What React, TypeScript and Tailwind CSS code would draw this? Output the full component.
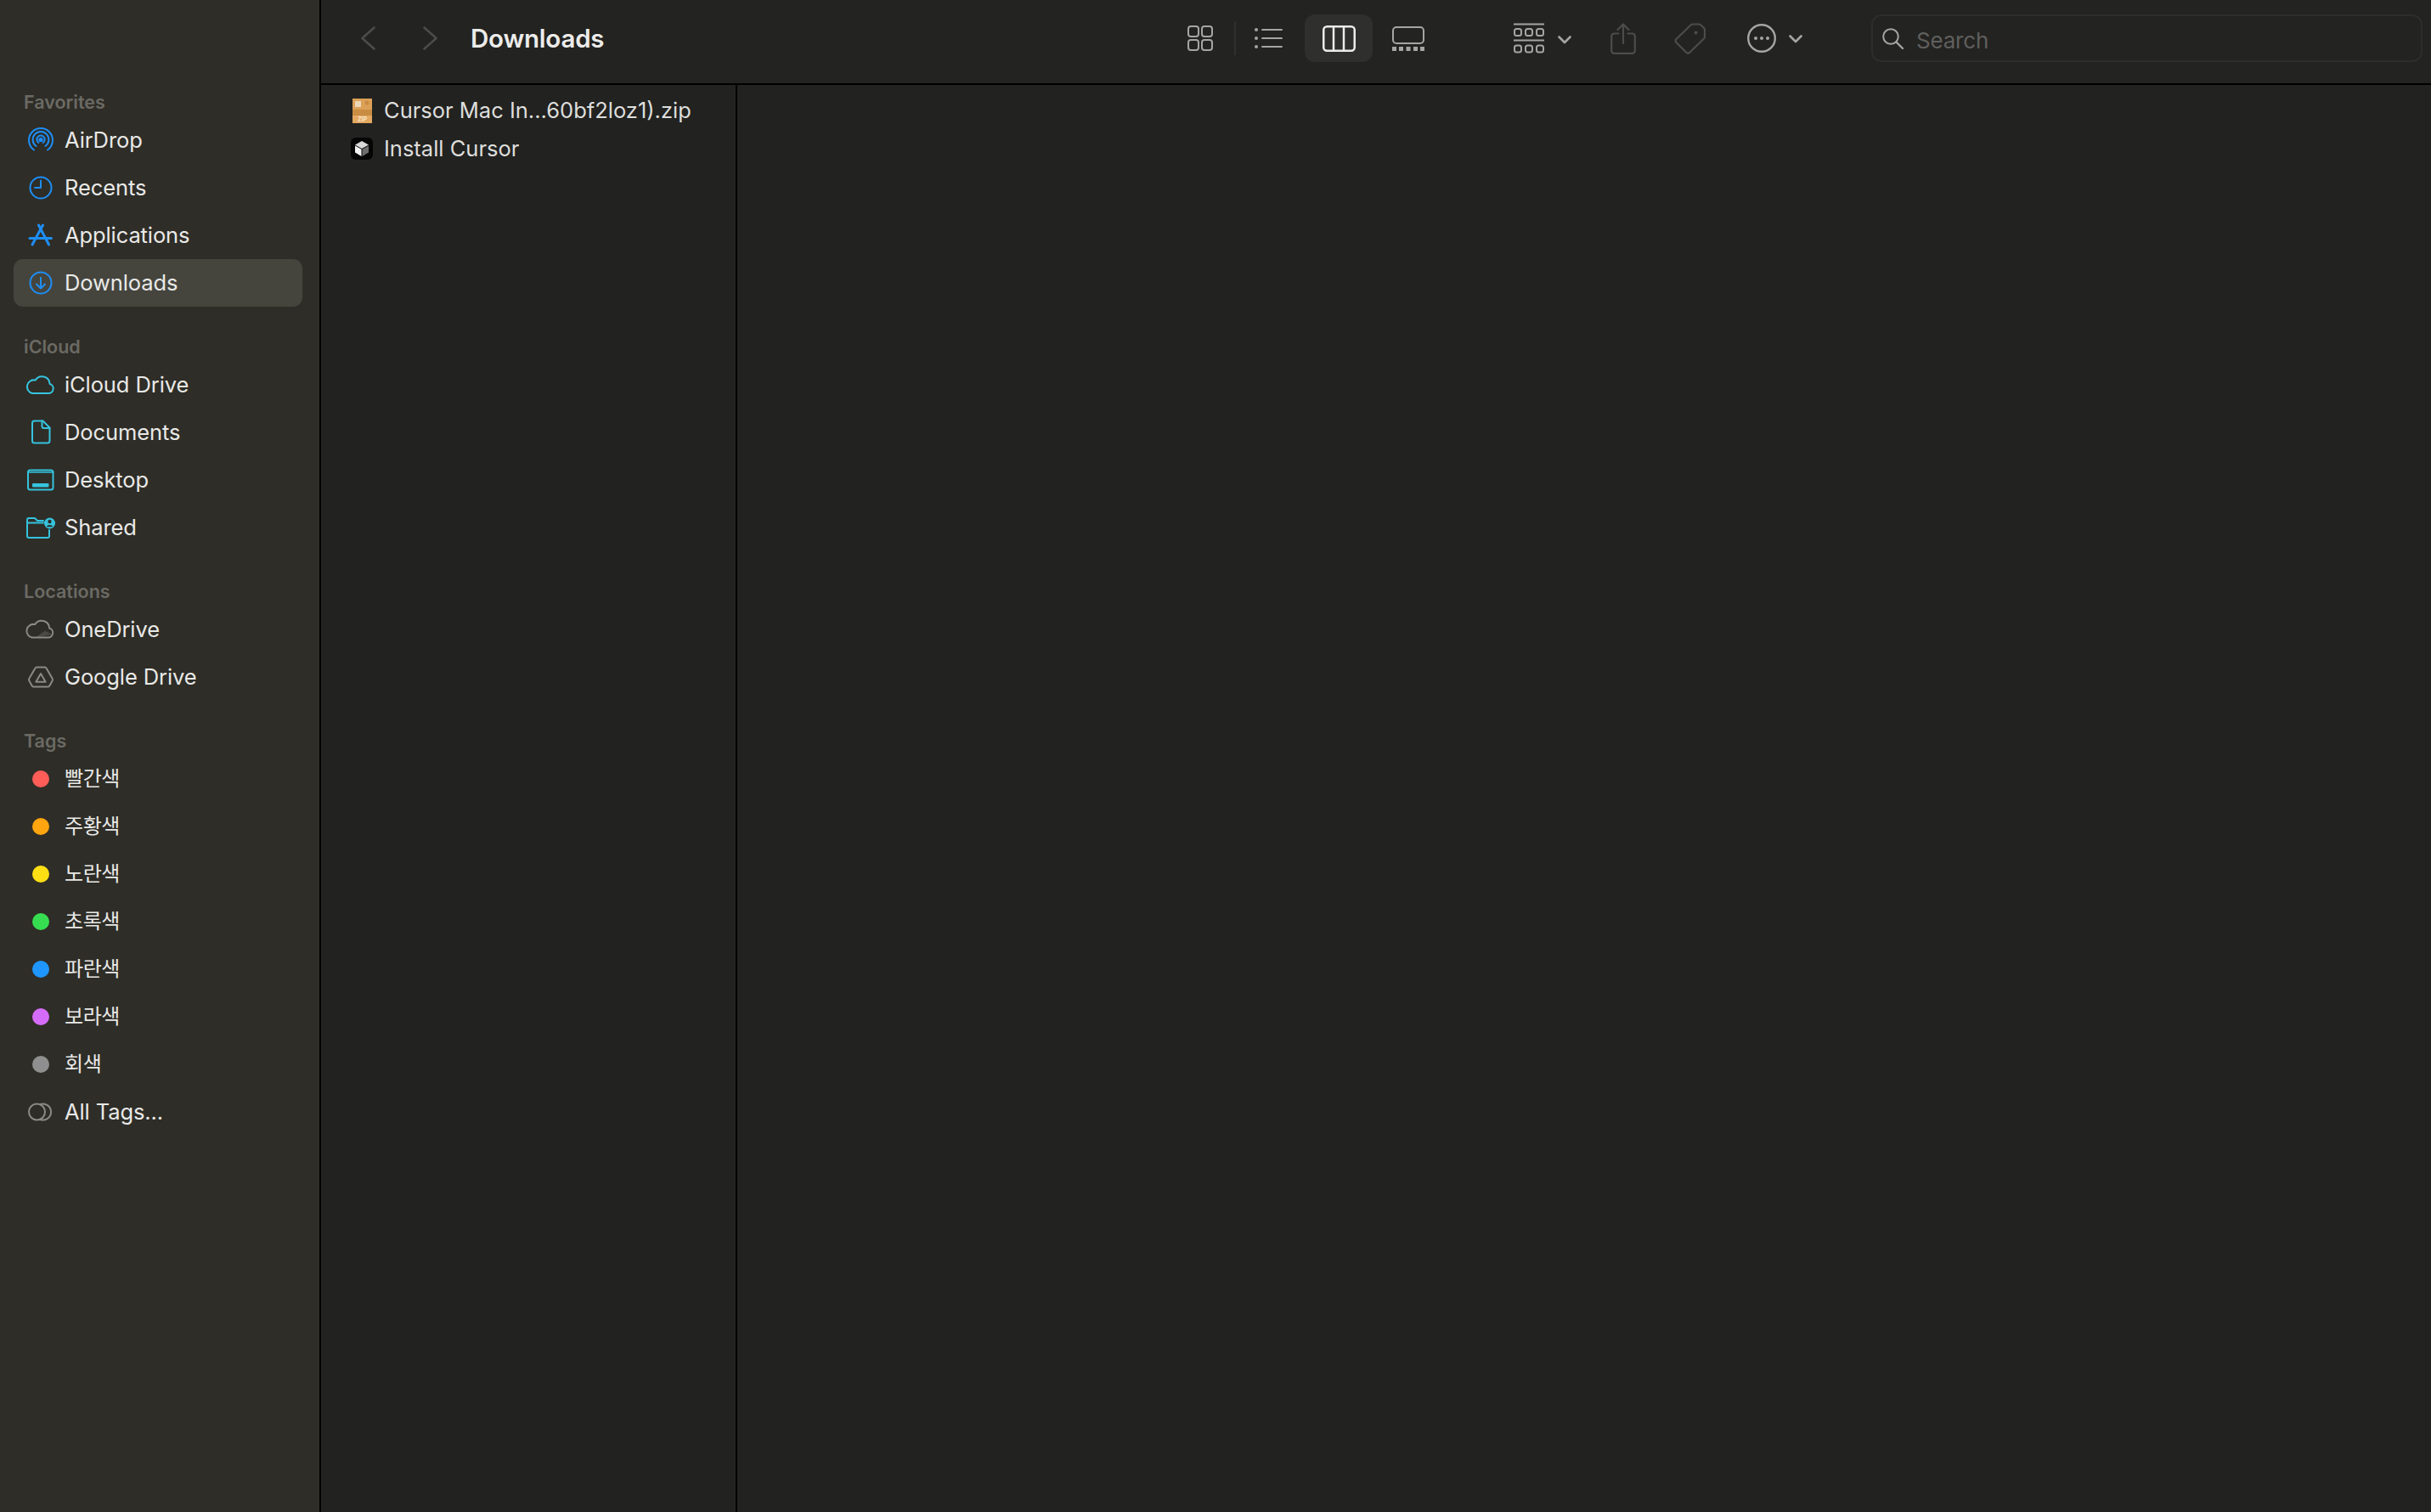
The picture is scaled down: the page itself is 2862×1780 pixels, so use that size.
const font = "[font-family:Inter,'Noto_Sans_CJK_KR',sans-serif]"

const BLUE = '#1e8ef5'
const CYAN = '#35c3de'
const GRAY = '#8b8b86'

function SideIcon({ color, children }: { color: string; children: React.ReactNode }) {
  return (
    <svg width="38" height="38" viewBox="0 0 38 38" fill="none" stroke={color} strokeWidth="2" strokeLinecap="round" strokeLinejoin="round">
      {children}
    </svg>
  )
}

const cloud = 'M9 29h19a5.6 5.6 0 0 0 1.6-11 A9.2 9.2 0 0 0 12.6 13.6 A7.8 7.8 0 0 0 9 29z'

const icons: Record<string, React.ReactNode> = {
  AirDrop: (
    <SideIcon color={BLUE}>
      <path d="M11 30.5 A14 14 0 1 1 27 30.5" />
      <path d="M13.6 26 A9.4 9.4 0 1 1 24.4 26" />
      <path d="M16.4 22 A4.6 4.6 0 1 1 21.6 22" />
      <circle cx="19" cy="18.5" r="1.6" fill={BLUE} />
    </SideIcon>
  ),
  Recents: (
    <SideIcon color={BLUE}>
      <circle cx="19" cy="19" r="12.5" />
      <path d="M19 10.5V19H12" />
    </SideIcon>
  ),
  Applications: (
    <SideIcon color={BLUE}>
      <path d="M21.5 7L9 30M16.5 7L28.5 30M6 22.5H31.5" strokeWidth="3" />
    </SideIcon>
  ),
  Downloads: (
    <SideIcon color={BLUE}>
      <circle cx="19" cy="19" r="12.5" />
      <path d="M19 13V25M14 20.5L19 25.5L24 20.5" />
    </SideIcon>
  ),
  'iCloud Drive': (
    <SideIcon color={CYAN}>
      <path d={cloud} />
    </SideIcon>
  ),
  Documents: (
    <SideIcon color={CYAN}>
      <path d="M11.5 5.5H21.5L29.5 13.5V29A2.5 2.5 0 0 1 27 31.5H11.5A2.5 2.5 0 0 1 9 29V8A2.5 2.5 0 0 1 11.5 5.5Z" />
      <path d="M20.5 5.5V12A2 2 0 0 0 22.5 14H29.5" />
    </SideIcon>
  ),
  Desktop: (
    <SideIcon color={CYAN}>
      <rect x="4" y="7.5" width="29.5" height="23" rx="2.5" />
      <path d="M4 10H33.5" strokeWidth="1.6" />
      <rect x="9" y="23" width="19.5" height="4.5" rx="1" fill={CYAN} stroke="none" />
    </SideIcon>
  ),
  Shared: (
    <SideIcon color={CYAN}>
      <path d="M22 13.5H3M3 29V10A2 2 0 0 1 5 8H12L15 11H22M3 29A2 2 0 0 0 5 31H27A2 2 0 0 0 29 29V22" />
      <circle cx="29.5" cy="14" r="6.5" fill={CYAN} stroke="none" />
      <circle cx="29.5" cy="12" r="2.2" fill="#2e2d27" stroke="none" />
      <path d="M25.6 18.2A4.2 3.6 0 0 1 33.4 18.2Z" fill="#2e2d27" stroke="none" />
    </SideIcon>
  ),
  OneDrive: (
    <SideIcon color={GRAY}>
      <path d="M12 29L24 20.5L32.6 25" stroke="none" fill="#4a4a44" />
      <path d={cloud} transform="translate(-0.5 -0.5)" />
    </SideIcon>
  ),
  'Google Drive': (
    <SideIcon color={GRAY}>
      <path d="M14.5 7.5H23.5Q25 7.5 25.8 9L32.6 20.8Q33.4 22 32.6 23.4L29.4 29.2Q28.6 30.6 27 30.6H11Q9.4 30.6 8.6 29.2L5.4 23.4Q4.6 22 5.4 20.8L12.2 9Q13 7.5 14.5 7.5Z" />
      <path d="M19 15L24.6 24.8H13.4Z" />
    </SideIcon>
  ),
  'All Tags...': (
    <SideIcon color={GRAY}>
      <circle cx="14.5" cy="19" r="9.5" />
      <path d="M18 10.2A9.5 9.5 0 1 1 18 27.8" />
    </SideIcon>
  ),
}

const sections: { title: string; items: string[] }[] = [
  { title: 'Favorites', items: ['AirDrop', 'Recents', 'Applications', 'Downloads'] },
  { title: 'iCloud', items: ['iCloud Drive', 'Documents', 'Desktop', 'Shared'] },
  { title: 'Locations', items: ['OneDrive', 'Google Drive'] },
]

const tags = [
  { name: '빨간색', className: 'bg-[#fe5d58]' },
  { name: '주황색', className: 'bg-[#fea50f]' },
  { name: '노란색', className: 'bg-[#fedf14]' },
  { name: '초록색', className: 'bg-[#37dd50]' },
  { name: '파란색', className: 'bg-[#1f96ff]' },
  { name: '보라색', className: 'bg-[#d56cf9]' },
  { name: '회색', className: 'bg-[#8f8f90]' },
]

function Heading({ title }: { title: string }) {
  return <div className="flex h-[34px] items-center pl-[28px] text-[21.5px] font-semibold text-[#6b6a64]">{title}</div>
}

function Row({ label, selected }: { label: string; selected?: boolean }) {
  return (
    <div className={`ml-4 flex h-14 w-[340px] items-center rounded-[11px] pl-[13px] ${selected ? 'bg-[#45453e]' : ''}`}>
      <div className="flex w-[38px] items-center justify-center">{icons[label]}</div>
      <span className="ml-[9px] text-[25.5px] tracking-[-0.1px] text-[#e9e9e7]">{label}</span>
    </div>
  )
}

function Sidebar() {
  return (
    <aside className="flex h-full w-[376px] shrink-0 flex-col gap-[30px] bg-[#2e2d27] pt-[103px]">
      {sections.map((s) => (
        <section key={s.title}>
          <Heading title={s.title} />
          {s.items.map((item) => (
            <Row key={item} label={item} selected={item === 'Downloads'} />
          ))}
        </section>
      ))}
      <section>
        <Heading title="Tags" />
        {tags.map((t) => (
          <div key={t.name} className="ml-4 flex h-14 w-[340px] items-center pl-[13px]">
            <div className="flex w-[38px] items-center justify-center">
              <div className={`h-5 w-5 rounded-full ${t.className}`} />
            </div>
            <span className="ml-[9px] text-[24px] tracking-[-0.4px] text-[#e9e9e7]">{t.name}</span>
          </div>
        ))}
        <Row label="All Tags..." />
      </section>
    </aside>
  )
}

function Chevron({ color }: { color: string }) {
  return (
    <svg width="16" height="10" viewBox="0 0 16 10" fill="none" stroke={color} strokeWidth="2.6" strokeLinecap="round" strokeLinejoin="round">
      <path d="M1.5 1.5L8 8L14.5 1.5" />
    </svg>
  )
}

function Toolbar() {
  const c = '#a5a5a2'
  const off = '#4c4c4a'
  return (
    <header className="flex h-[98px] shrink-0 items-center bg-[#232321] pb-2">
      <svg className="ml-[47px]" width="17" height="28" viewBox="0 0 17 28" fill="none" stroke={off} strokeWidth="2.6" strokeLinecap="round" strokeLinejoin="round">
        <path d="M15.5 1.5L1.5 14L15.5 26.5" />
      </svg>
      <svg className="ml-[56px]" width="17" height="28" viewBox="0 0 17 28" fill="none" stroke={off} strokeWidth="2.6" strokeLinecap="round" strokeLinejoin="round">
        <path d="M1.5 1.5L15.5 14L1.5 26.5" />
      </svg>
      <h1 className="ml-[39px] text-[29.5px] font-semibold tracking-[-0.2px] text-[#ececea]">Downloads</h1>

      <div className="ml-auto flex items-center pr-[10px]">
        {/* icon view */}
        <svg width="30" height="30" viewBox="0 0 30 30" fill="none" stroke={c} strokeWidth="2">
          <rect x="1" y="1" width="12" height="12" rx="3" />
          <rect x="17" y="1" width="12" height="12" rx="3" />
          <rect x="1" y="17" width="12" height="12" rx="3" />
          <rect x="17" y="17" width="12" height="12" rx="3" />
        </svg>
        <div className="ml-[25px] h-10 w-0.5 bg-[#30302e]" />
        {/* list view */}
        <svg className="ml-[22px]" width="33" height="24" viewBox="0 0 33 24" fill="none" stroke={c} strokeWidth="2" strokeLinecap="round">
          <path d="M9 2H32M9 12H32M9 22H32" />
          <circle cx="2" cy="2" r="2" fill={c} stroke="none" />
          <circle cx="2" cy="12" r="2" fill={c} stroke="none" />
          <circle cx="2" cy="22" r="2" fill={c} stroke="none" />
        </svg>
        {/* column view, selected */}
        <div className="ml-[26px] flex h-14 w-20 items-center justify-center rounded-xl bg-[#2f2f2d]">
          <svg width="39" height="31" viewBox="0 0 39 31" fill="none" stroke="#ecebe9" strokeWidth="2.5">
            <rect x="1.25" y="1.25" width="36.5" height="28.5" rx="4" />
            <path d="M13 1V30M25 1V30" />
          </svg>
        </div>
        {/* gallery view */}
        <svg className="ml-[23px]" width="38" height="29" viewBox="0 0 38 29" fill="none" stroke={c} strokeWidth="2">
          <rect x="1" y="1" width="36" height="19" rx="4" />
          <g fill={c} stroke="none">
            <rect x="0" y="24" width="5" height="5" />
            <rect x="8" y="24" width="5" height="5" />
            <rect x="16.5" y="24" width="5" height="5" />
            <rect x="25" y="24" width="5" height="5" />
            <rect x="33" y="24" width="5" height="5" />
          </g>
        </svg>
        {/* group by */}
        <svg className="ml-[105px]" width="36" height="36" viewBox="0 0 36 36" fill="none" stroke={c} strokeWidth="2">
          <path d="M0 1.5H36M0 20.5H36" />
          <rect x="1" y="7" width="8" height="8" rx="2.5" />
          <rect x="14" y="7" width="8" height="8" rx="2.5" />
          <rect x="27" y="7" width="8" height="8" rx="2.5" />
          <rect x="1" y="26.5" width="8" height="8" rx="2.5" />
          <rect x="14" y="26.5" width="8" height="8" rx="2.5" />
          <rect x="27" y="26.5" width="8" height="8" rx="2.5" />
        </svg>
        <div className="ml-4 mt-[3px] flex">
          <Chevron color={c} />
        </div>
        {/* share */}
        <svg className="ml-[46px]" width="30" height="37" viewBox="0 0 30 37" fill="none" stroke={off} strokeWidth="2.2" strokeLinecap="round" strokeLinejoin="round">
          <path d="M9.5 12.5H4.5A3.2 3.2 0 0 0 1.2 15.7V32.5A3.2 3.2 0 0 0 4.5 35.8H25.5A3.2 3.2 0 0 0 28.8 32.5V15.7A3.2 3.2 0 0 0 25.5 12.5H20.5" />
          <path d="M15 24V1.8M8.5 8L15 1.5L21.5 8" />
        </svg>
        {/* tag */}
        <svg className="ml-[45px]" width="37" height="37" viewBox="0 0 37 37" fill="none" stroke={off} strokeWidth="2.2" strokeLinejoin="round">
          <path d="M2.5 19L19.5 2.5Q20.5 1.5 22 1.5H29Q30.5 1.5 31.5 2.5L35 6Q36 7 36 8.5V16Q36 17.5 35 18.5L18 35Q16 36.5 14.5 35L2.5 23Q0.5 21 2.5 19Z" />
          <circle cx="25.5" cy="11.5" r="2" fill={off} stroke="none" />
        </svg>
        {/* more */}
        <svg className="ml-[49px]" width="34" height="34" viewBox="0 0 34 34" fill="none" stroke={c} strokeWidth="2.4">
          <circle cx="17" cy="17" r="15.8" />
          <circle cx="10" cy="17" r="2" fill={c} stroke="none" />
          <circle cx="17" cy="17" r="2" fill={c} stroke="none" />
          <circle cx="24" cy="17" r="2" fill={c} stroke="none" />
        </svg>
        <div className="ml-[15px] mt-[2px] flex">
          <Chevron color={c} />
        </div>
        {/* search */}
        <div className="ml-[81px] flex h-14 w-[649px] items-center rounded-xl border-2 border-[#2d2d2b] pl-[11px]">
          <svg width="25" height="25" viewBox="0 0 25 25" fill="none" stroke={c} strokeWidth="2" strokeLinecap="round">
            <circle cx="10" cy="10" r="8.8" />
            <path d="M16.5 16.5L24 24" strokeWidth="2.4" />
          </svg>
          <span className="ml-[15px] mt-[5px] text-[26px] tracking-[-0.2px] text-[#5f5f5d]">Search</span>
        </div>
      </div>
    </header>
  )
}

function ZipIcon() {
  return (
    <svg width="23" height="29" viewBox="0 0 23 29">
      <rect width="23" height="29" fill="#dca057" />
      <rect y="13" width="23" height="7" fill="#c98c43" />
      <rect y="20" width="23" height="9" fill="#e3a861" />
      <rect x="3" y="3" width="7" height="7" fill="#ecd7b8" />
      <circle cx="17" cy="5" r="2.5" fill="#c98c43" />
      <text x="11.5" y="27" textAnchor="middle" fontSize="7" fontWeight="700" fill="#f6e6cc" fontFamily="Inter, sans-serif">ZIP</text>
    </svg>
  )
}

function CubeIcon() {
  return (
    <svg width="26" height="26" viewBox="0 0 26 26">
      <rect width="26" height="26" rx="6" fill="#050505" />
      <path d="M13 4L21 8.5L13 13L5 8.5Z" fill="#d8d8d8" />
      <path d="M5 9.5L12.5 13.8V22L5 17.5Z" fill="#f2f2f2" />
      <path d="M21 9.5L13.5 13.8V22L21 17.5Z" fill="#6d6d6d" />
    </svg>
  )
}

function FileRow({ icon, name }: { icon: React.ReactNode; name: string }) {
  return (
    <div className="flex h-[44.5px] items-center">
      <div className="flex w-[74px] shrink-0 pl-[35px]">
        <div className="flex w-[26px] justify-center">{icon}</div>
      </div>
      <span className="text-[25.5px] text-[#dededc]">{name}</span>
    </div>
  )
}

export default function App() {
  return (
    <div className={`flex h-[1780px] w-[2862px] overflow-hidden bg-[#222220] ${font}`}>
      <Sidebar />
      <div className="w-0.5 shrink-0 bg-black" />
      <main className="flex min-w-0 flex-1 flex-col">
        <Toolbar />
        <div className="h-0.5 shrink-0 bg-black" />
        <div className="flex min-h-0 flex-1">
          <div className="w-[490px] shrink-0 border-r-2 border-black pt-[8px]">
            <FileRow icon={<ZipIcon />} name="Cursor Mac In...60bf2loz1).zip" />
            <FileRow icon={<CubeIcon />} name="Install Cursor" />
          </div>
          <div className="flex-1" />
        </div>
      </main>
    </div>
  )
}
